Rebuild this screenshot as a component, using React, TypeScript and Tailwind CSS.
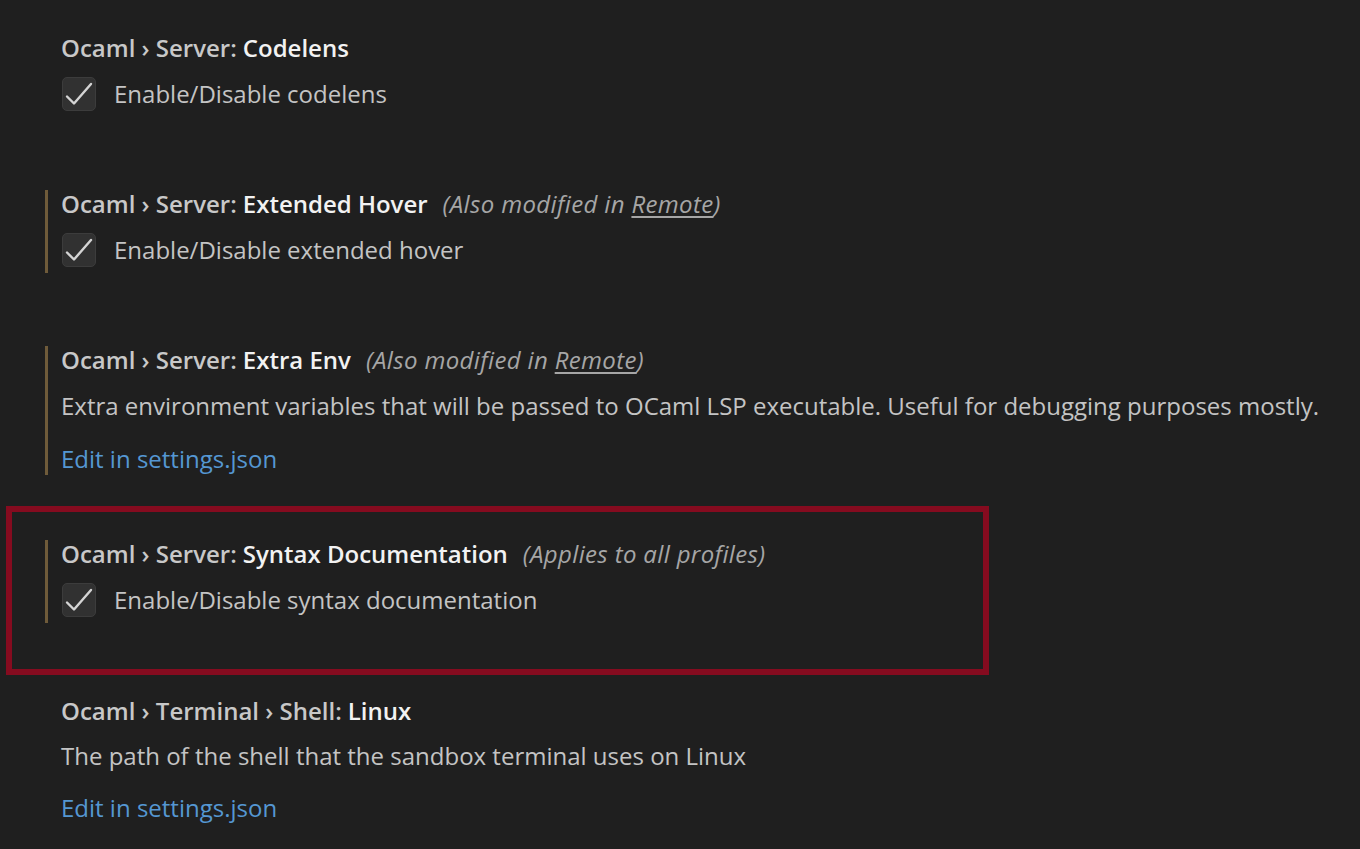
import type { ReactNode } from "react";

const FONT = { fontFamily: '"Open Sans", "Noto Sans", sans-serif' };

function Check() {
  return (
    <div className="flex h-[34px] w-[34px] shrink-0 items-center justify-center rounded-[5px] border border-[#3c3c3c] bg-[#313131]">
      <svg width="34" height="34" viewBox="0 0 34 34" fill="none" className="-m-px">
        <path d="M5 19.5 L12 26.5 L29 7" stroke="#d4d4d4" strokeWidth="2.4" strokeLinecap="round" strokeLinejoin="round" />
      </svg>
    </div>
  );
}

function Title({ path, label, note }: { path: string; label: string; note?: ReactNode }) {
  return (
    <div className="flex h-[28px] items-center whitespace-nowrap text-[24px] leading-[28px]">
      <span className="font-semibold text-[#c8c8c8]">{path}</span>
      <span className="ml-[6px] font-semibold text-[#f2f2f2]">{label}</span>
      {note && <span className="ml-[15px] italic tracking-[0.35px] text-[#a6a6a6]">{note}</span>}
    </div>
  );
}

function Item({ modified, children, className }: { modified?: boolean; children: ReactNode; className?: string }) {
  return (
    <div className={"pl-[45px] " + (className ?? "")}>
      <div className={"border-l-[3px] pl-[13px] " + (modified ? "border-[#6f5b3a]" : "border-transparent")}>{children}</div>
    </div>
  );
}

function CheckRow({ text }: { text: string }) {
  return (
    <div className="mt-[15px] flex items-center gap-[18px] pl-px">
      <Check />
      <span className="text-[24px] leading-[28px] text-[#c4c4c4]">{text}</span>
    </div>
  );
}

const remote = (
  <>
    (Also modified in <span className="underline underline-offset-[3px]">Remote</span>)
  </>
);

export default function App() {
  return (
    <div className="min-h-[849px] w-[1360px] bg-[#1f1f1f] pt-[34px]" style={FONT}>
      <Item>
        <Title path="Ocaml › Server:" label="Codelens" />
        <CheckRow text="Enable/Disable codelens" />
        <div className="h-[6px]" />
      </Item>

      <Item modified className="mt-[73px]">
        <Title path="Ocaml › Server:" label="Extended Hover" note={remote} />
        <CheckRow text="Enable/Disable extended hover" />
        <div className="h-[6px]" />
      </Item>

      <Item modified className="mt-[73px]">
        <Title path="Ocaml › Server:" label="Extra Env" note={remote} />
        <p className="mt-[18px] h-[28px] text-[24px] leading-[28px] whitespace-nowrap text-[#c4c4c4]">
          Extra environment variables that will be passed to OCaml LSP executable. Useful for debugging purposes mostly.
        </p>
        <p className="mt-[25px] h-[28px] text-[24px] leading-[28px] text-[#5597d2]">Edit in settings.json</p>
        <div className="h-[2px]" />
      </Item>

      <div className="ml-[6px] mt-[31px] w-[983px] border-[6px] border-[#850b1f] pb-[46px] pt-[28px]">
        <div className="pl-[33px]">
          <div className="border-l-[3px] border-[#6f5b3a] pl-[13px]">
            <Title path="Ocaml › Server:" label="Syntax Documentation" note="(Applies to all profiles)" />
            <CheckRow text="Enable/Disable syntax documentation" />
            <div className="h-[6px]" />
          </div>
        </div>
      </div>

      <Item className="mt-[22px]">
        <Title path="Ocaml › Terminal › Shell:" label="Linux" />
        <p className="mt-[17px] h-[28px] text-[24px] leading-[28px] text-[#c4c4c4]">
          The path of the shell that the sandbox terminal uses on Linux
        </p>
        <p className="mt-[24px] h-[28px] text-[24px] leading-[28px] text-[#5597d2]">Edit in settings.json</p>
      </Item>
    </div>
  );
}
